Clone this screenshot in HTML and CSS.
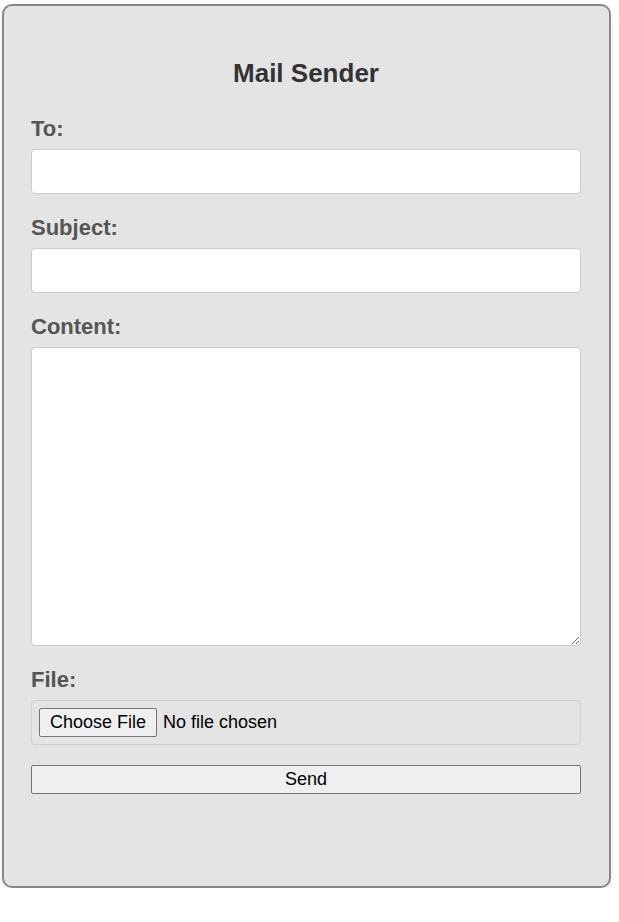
FILE: index.html
```html
<!DOCTYPE html>
<html lang="en">
<head>
<meta charset="utf-8">
<title>Mail Sender</title>
<link rel="stylesheet" href="styles.css">
</head>
<body>
<div class="container">
  <h2 class="title">Mail Sender</h2>
  <form class="form">
    <label class="label" for="to">To:</label>
    <input class="field" type="text" id="to">
    <label class="label" for="subject">Subject:</label>
    <input class="field" type="text" id="subject">
    <label class="label" for="content">Content:</label>
    <textarea class="field area" id="content"></textarea>
    <label class="label" for="file">File:</label>
    <input class="file" type="file" id="file">
    <button class="send" type="button">Send</button>
  </form>
</div>
</body>
</html>
```
FILE: styles.css
```css
html, body {
  margin: 0;
  padding: 0;
  background: #ffffff;
  font-family: "Liberation Sans", Arial, sans-serif;
}
.container {
  margin: 4px 8px 0 2px;
  border: 2px solid #888888;
  border-radius: 10px;
  background: #e4e4e4;
  padding: 52px 28px 92px 27px;
  box-shadow: 0 3px 10px rgba(0, 0, 0, 0.08);
  height: 884px;
  box-sizing: border-box;
}
.title {
  margin: 0 0 28px;
  font-size: 26px;
  line-height: 30px;
  font-weight: bold;
  color: #333333;
  text-align: center;
}
.form {
  display: flex;
  flex-direction: column;
}
.label {
  display: block;
  font-size: 22px;
  line-height: 25px;
  font-weight: bold;
  color: #555555;
  margin-bottom: 8px;
}
.field {
  display: block;
  box-sizing: border-box;
  width: 100%;
  height: 45px;
  border: 1px solid #cccccc;
  border-radius: 4px;
  background: #ffffff;
  margin: 0 0 21px;
  padding: 8px;
  font-family: "Liberation Sans", Arial, sans-serif;
  font-size: 18px;
}
.area {
  height: 299px;
  resize: vertical;
}
.file {
  display: block;
  box-sizing: border-box;
  width: 100%;
  height: 45px;
  border: 1px solid #d0d0d0;
  border-radius: 4px;
  background: transparent;
  padding: 7px;
  margin: 0 0 20px;
  font-family: "Liberation Sans", Arial, sans-serif;
  font-size: 18px;
  color: #000000;
}
.file::file-selector-button {
  font-family: "Liberation Sans", Arial, sans-serif;
  font-size: 18px;
  height: 29px;
  padding: 0 10px;
  margin-right: 6px;
  background: #efefef;
  border: 1px solid #767676;
  border-radius: 2px;
  color: #000000;
}
.send {
  display: block;
  box-sizing: border-box;
  width: 100%;
  height: 29px;
  background: #efefef;
  border: 1px solid #767676;
  border-radius: 2px;
  font-family: "Liberation Sans", Arial, sans-serif;
  font-size: 18px;
  color: #000000;
  padding: 0;
}
```
